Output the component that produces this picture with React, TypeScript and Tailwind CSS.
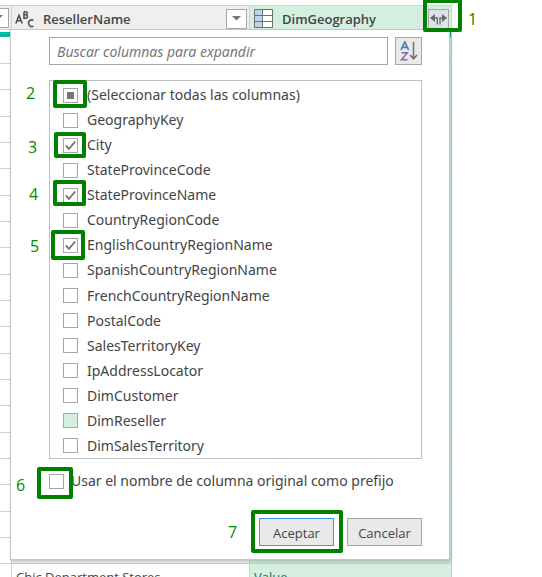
import { useState } from "react";

const columns = [
  "GeographyKey",
  "City",
  "StateProvinceCode",
  "StateProvinceName",
  "CountryRegionCode",
  "EnglishCountryRegionName",
  "SpanishCountryRegionName",
  "FrenchCountryRegionName",
  "PostalCode",
  "SalesTerritoryKey",
  "IpAddressLocator",
  "DimCustomer",
  "DimReseller",
  "DimSalesTerritory",
];

const emptyRows = Array.from({ length: 19 }, (_, i) => i);

const callouts = [
  { n: 1, num: "left-[468px] top-[9px]", box: "left-[423px] top-[-1px] w-[39px] h-[33px]" },
  { n: 2, num: "left-[26px] top-[83px]", box: "left-[53px] top-[80px] w-[34px] h-[28px]" },
  { n: 3, num: "left-[28px] top-[137px]", box: "left-[54px] top-[132px] w-[32px] h-[26px]" },
  { n: 4, num: "left-[29px] top-[184px]", box: "left-[53px] top-[180px] w-[33px] h-[26px]" },
  { n: 5, num: "left-[30px] top-[236px]", box: "left-[51px] top-[230px] w-[34px] h-[30px]" },
  { n: 6, num: "left-[16px] top-[475px]", box: "left-[37px] top-[467px] w-[36px] h-[32px]" },
  { n: 7, num: "left-[228px] top-[522px]", box: "left-[251px] top-[510px] w-[92px] h-[43px]" },
];

function FilterButton({ label }: { label: string }) {
  return (
    <button
      aria-label={label}
      className="flex h-5 w-[21px] shrink-0 items-center justify-center border border-[#a6a6a6] bg-white"
    >
      <svg width="9" height="5" viewBox="0 0 9 5">
        <path d="M0 0h9L4.5 4.5z" fill="#757575" />
      </svg>
    </button>
  );
}

function TextTypeIcon() {
  return (
    <svg width="20" height="18" viewBox="0 0 20 18" fill="none" stroke="#505050" strokeWidth="1.6">
      <path d="M.8 13.5 4 5.5l3.2 8M2 10.8h4" />
      <path d="M9 1.8v6.4h2a1.8 1.8 0 0 0 0-3.5H9h1.8a1.4 1.4 0 0 0 0-2.9H9" />
      <path d="M18.5 10.3c-2.4-1.2-5 .1-5 2.9s2.6 4.1 5 2.9" />
    </svg>
  );
}

function TableIcon() {
  return (
    <svg width="19" height="19" viewBox="0 0 19 19">
      <path d="M.5.5h18v18H.5z" fill="#fff" />
      <path d="M1 1h8v17H1z" fill="#c0d4ea" />
      <path d="M.5.5h18v18H.5zM8.5.5v18M.5 6.5h18M.5 12.5h18" fill="none" stroke="#707070" />
    </svg>
  );
}

function ExpandIcon() {
  return (
    <svg width="17" height="12" viewBox="0 0 17 12">
      <path d="M0 5 5 1v8zM17 5 12 1v8z" fill="#686868" />
      <path d="M4 5h3.300v6.500M13 5H10v6.500" fill="none" stroke="#686868" strokeWidth="1.300" />
    </svg>
  );
}

function SortIcon() {
  return (
    <svg width="18" height="20" viewBox="0 0 18 20" fill="none">
      <path d="M1 9 4.8.8 8.6 9M2.3 6.3h5" stroke="#4a82b8" strokeWidth="1.7" />
      <path d="M1.5 11.7h5.800L1.5 18.700h6" stroke="#9160b5" strokeWidth="1.5" />
      <path d="M13.5 1v16.500M10 14l3.500 3.800L17 14" stroke="#707070" strokeWidth="1.5" />
    </svg>
  );
}

type CheckProps = {
  label: string;
  checked: boolean;
  partial?: boolean;
  hot?: boolean;
  gap?: string;
  onChange: () => void;
};

function Check({ label, checked, partial, hot, gap = "gap-[9px]", onChange }: CheckProps) {
  return (
    <label className={`flex h-6 items-center font-['Noto_Sans',sans-serif] text-sm text-[#444] ${gap}`}>
      <span className="grid size-[15px] shrink-0">
        <input
          type="checkbox"
          checked={checked}
          onChange={onChange}
          className={`col-start-1 row-start-1 size-[15px] appearance-none border ${
            hot ? "border-[#86bf9f] bg-[#d4efe0]" : "border-[#a6a6a6] bg-white"
          }`}
        />
        {partial && <span className="col-start-1 row-start-1 size-[7px] place-self-center bg-[#757575]" />}
        {checked && !partial && (
          <svg className="col-start-1 row-start-1 place-self-center" width="11" height="11" viewBox="0 0 11 11">
            <path d="M.8 5.5 4 8.8 10.2 1.500" fill="none" stroke="#757575" strokeWidth="1.9" />
          </svg>
        )}
      </span>
      {label}
    </label>
  );
}

export default function App() {
  const [selected, setSelected] = useState(["City", "StateProvinceName", "EnglishCountryRegionName"]);
  const [prefix, setPrefix] = useState(false);
  const toggle = (name: string) =>
    setSelected((s) => (s.includes(name) ? s.filter((x) => x !== name) : [...s, name]));
  const all = selected.length === columns.length;

  return (
    <main className="relative h-screen overflow-hidden bg-white pt-[5px] pr-[90px] font-['Open_Sans','Noto_Sans',sans-serif] text-[#444]">
      <table className="w-full table-fixed border-separate border-spacing-0">
        <colgroup>
          <col className="w-3" />
          <col className="w-[238px]" />
          <col />
        </colgroup>
        <thead>
          <tr className="h-[25px] text-left text-[13px] leading-5">
            <th className="overflow-hidden border-y border-r border-[#d0d0d0] bg-[#efefef] p-0">
              <div className="flex w-[9px] justify-end overflow-hidden">
                <FilterButton label="Filtrar columna anterior" />
              </div>
            </th>
            <th className="border-y border-r border-[#d0d0d0] bg-[#efefef] p-0">
              <div className="flex items-center pt-0.5 pr-0.5 pl-[3px]">
                <TextTypeIcon />
                <span className="flex-1 pl-2 font-semibold">ResellerName</span>
                <FilterButton label="Filtrar ResellerName" />
              </div>
            </th>
            <th className="border-y border-r border-[#c3dccf] bg-[#d4efe0] p-0">
              <div className="flex items-center pt-0.5 pr-0.5 pl-1">
                <TableIcon />
                <span className="flex-1 pl-[9px] font-semibold">DimGeography</span>
                <button
                  aria-label="Expandir DimGeography"
                  className="flex h-5 w-[21px] items-center justify-center border border-[#a6a6a6] bg-[#dfe1ea]"
                >
                  <ExpandIcon />
                </button>
              </div>
            </th>
          </tr>
        </thead>
        <tbody>
          <tr className="h-[34px]">
            {["bg-white", "bg-white", "bg-[#d4efe0]"].map((bg, i) => (
              <td key={i} className={`border-r border-b border-[#d0d0d0] p-0 align-top ${bg}`}>
                <div className="mt-[2px] h-[5px] bg-[#01b8aa]" />
              </td>
            ))}
          </tr>
          {emptyRows.map((i) => (
            <tr key={i} className="h-[26px] nth-[3n]:h-[27px]">
              <td className="border-r border-b border-[#d0d0d0] bg-white p-0" />
              <td className="border-r border-b border-[#d0d0d0] bg-[#f5f5f5] p-0" />
              <td className="border-r border-b border-[#c3d3ca] bg-[#d4efe0] p-0" />
            </tr>
          ))}
          <tr className="h-[26px] text-[13px] leading-5">
            <td className="border-r border-[#d0d0d0] p-0" />
            <td className="border-r border-[#d0d0d0] p-0 pl-1">Chic Department Stores</td>
            <td className="border-r border-[#c3d3ca] bg-[#d4efe0] p-0 pl-1 text-[#217346]">Value</td>
          </tr>
        </tbody>
      </table>

      <form
        onSubmit={(e) => e.preventDefault()}
        className="absolute top-[29px] right-[92px] left-[10px] border border-[#c6c6c6] bg-white pt-[7px] pr-[27px] pb-[13px] pl-[38px] shadow-[1px_2px_3px_rgba(0,0,0,0.2)]"
      >
        <div className="flex gap-[7px]">
          <input
            type="search"
            aria-label="Buscar columnas para expandir"
            placeholder="Buscar columnas para expandir"
            className="h-7 min-w-0 flex-1 border border-[#a6a6a6] bg-white px-[7px] font-['Noto_Sans',sans-serif] text-sm placeholder:text-[#777] placeholder:italic"
          />
          <button
            type="button"
            aria-label="Ordenar"
            className="flex h-7 w-[27px] items-center justify-center border border-[#a6a6a6] bg-[#e9e9e9]"
          >
            <SortIcon />
          </button>
        </div>
        <div className="mt-[15px] flex h-[379px] flex-col justify-between border border-[#c0c0c0] pt-0.5 pl-[13px]">
          <Check
            label="(Seleccionar todas las columnas)"
            checked={all}
            partial={selected.length > 0 && !all}
            onChange={() => setSelected(all ? [] : columns)}
          />
          {columns.map((name) => (
            <Check
              key={name}
              label={name}
              checked={selected.includes(name)}
              hot={name === "DimReseller"}
              onChange={() => toggle(name)}
            />
          ))}
        </div>
        <div className="mt-[10px]">
          <Check
            label="Usar el nombre de columna original como prefijo"
            gap="gap-[7px]"
            checked={prefix}
            onChange={() => setPrefix(!prefix)}
          />
        </div>
        <div className="mt-[25px] flex justify-end gap-[13px] text-[13px]">
          <button className="h-7 w-[75px] border border-[#3c96f5] bg-[#e9e9e9] pt-1">Aceptar</button>
          <button type="button" className="h-7 w-[75px] border border-[#a6a6a6] bg-[#e9e9e9] pt-1">
            Cancelar
          </button>
        </div>
      </form>

      {callouts.map((c) => (
        <div key={c.n} className="pointer-events-none text-base leading-5 text-[#008a00]">
          <span className={`absolute ${c.num}`}>{c.n}</span>
          <span className={`absolute rounded-xs border-4 border-[#008000] ${c.box}`} />
        </div>
      ))}
    </main>
  );
}
